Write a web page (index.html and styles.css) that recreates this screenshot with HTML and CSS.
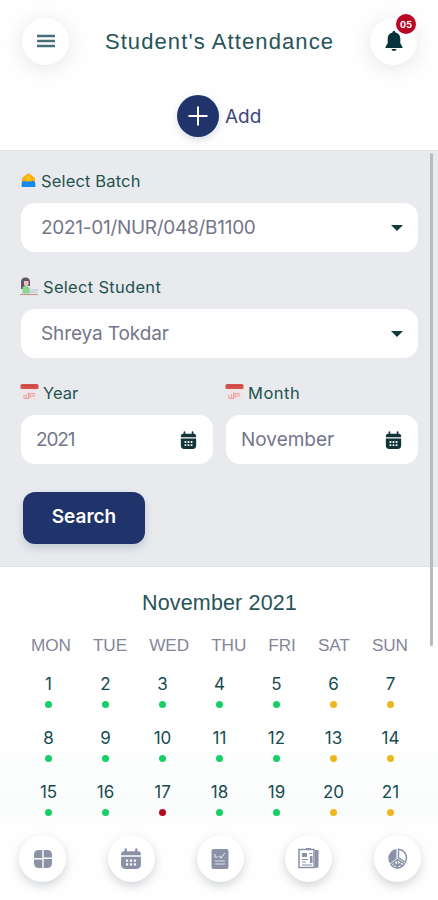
FILE: index.html
```html
<!DOCTYPE html>
<html lang="en">
<head>
<meta charset="utf-8">
<meta name="viewport" content="width=device-width, initial-scale=1">
<title>Student's Attendance</title>
<link rel="stylesheet" href="styles.css">
</head>
<body>
<svg class="defs" aria-hidden="true">
  <symbol id="calendar" viewBox="0 0 20 20" preserveAspectRatio="none">
    <path fill="currentColor" d="M1 5.2Q1.200 3 3.500 3h.7V1.200a1 1 0 0 1 2 0V3h7.600V1.200a1 1 0 0 1 2 0V3h.7Q18.800 3 19 5.200V6.500H1z"/>
    <path fill="currentColor" fill-rule="evenodd" d="M1 8h18v7q0 4-4 4H5q-4 0-4-4zM5.400 10.500v2h2v-2zm3.600 0v2h2v-2zm3.600 0v2h2v-2zm-7.200 3.400v2h2v-2zm3.600 0v2h2v-2zm3.600 0v2h2v-2z"/>
  </symbol>
  <symbol id="date" viewBox="0 0 19 18">
    <path fill="#efe5e8" d="M2 5h15v12H2z"/>
    <path fill="#d6534d" d="M2 1h15q1.500 0 1.500 1.500V5q0 1-1 1h-16q-1 0-1-1V2.500Q.5 1 2 1z"/>
    <path stroke="#b93f3c" stroke-width=".8" d="M3 2.800h13"/>
    <path fill="none" stroke="#e9a29e" stroke-width="1.100" d="M4 12v3.500M6.300 11v4M8.500 9.500v6M10 15v-4.500h4v2.500h-3.500M4 15.500h5"/>
  </symbol>
</svg>
<div class="app">
  <header class="header">
    <button class="round" aria-label="Menu"><svg width="18" height="14" viewBox="0 0 18 14"><path d="M0 2h18M0 7h18M0 12h18" stroke="#457078" stroke-width="2.600"/></svg></button>
    <h1>Student's Attendance</h1>
    <button class="round" aria-label="Notifications"><svg width="18" height="21" viewBox="0 0 18 21"><path fill="#06333c" d="M9 0c1 0 1.500.7 1.500 1.600C14 2.400 15.300 5 15.300 8v4.200L17.500 16v1H.5v-1l2.200-3.800V8c0-3 1.300-5.600 4.800-6.400C7.500.7 8 0 9 0zM6.300 18h5.400Q11 20 9 20t-2.700-2z"/></svg><span class="badge">05</span></button>
  </header>
  <div class="add"><button class="plus" aria-label="Add"><svg width="20" height="20" viewBox="0 0 20 20"><path d="M10 .5v19M.5 10h19" stroke="#fff" stroke-width="2"/></svg></button><span>Add</span></div>

  <main class="panel">
    <label class="label batch"><svg width="15" height="16" viewBox="0 0 15 16"><path fill="#ffad0c" d="M7.500 0l3 2.200 3.500 3L14 9H1V5.200l3.500-3z"/><circle cx="7.500" cy="5.500" r="2.300" fill="#ffc519"/><path fill="#1688ee" d="M.7 9.500Q3 6.500 5 8.500h5q2-2 4.300 1V14H.7z"/></svg><span>Select Batch</span></label>
    <div class="field select"><span class="value v1">2021-01/NUR/048/B1100</span><i class="caret"></i></div>
    <label class="label student"><svg width="19" height="19" viewBox="0 0 19 19"><path fill="#635568" d="M1 12V5q0-4.500 4.500-4.500T10 5v4H7l-3 3z"/><path fill="#e7c4bb" d="M4 4h4.500v4L6 10 4 8z"/><path fill="#8bd78f" d="M2.500 10L6 8.500 9.800 11v5.500H2.500z"/><path fill="#c9d7df" d="M9 16l2-4h7.500l-2 4z"/><path stroke="#c99991" stroke-width="1.200" d="M0 17.500h18"/></svg><span>Select Student</span></label>
    <div class="field select"><span class="value v2">Shreya Tokdar</span><i class="caret"></i></div>
    <div class="pair">
      <div>
        <label class="label"><svg width="19" height="18"><use href="#date"/></svg><span>Year</span></label>
        <div class="field"><span class="value v3">2021</span><svg class="cal" width="17" height="19"><use href="#calendar"/></svg></div>
      </div>
      <div>
        <label class="label"><svg width="19" height="18"><use href="#date"/></svg><span class="l4">Month</span></label>
        <div class="field"><span class="value">November</span><svg class="cal" width="17" height="19"><use href="#calendar"/></svg></div>
      </div>
    </div>
    <button class="search">Search</button>
  </main>

  <section class="calendar">
    <h2>November 2021</h2>
    <div class="names"><span>MON</span><span>TUE</span><span>WED</span><span>THU</span><span>FRI</span><span>SAT</span><span>SUN</span></div>
    <div class="days"><span>1</span><span>2</span><span>3</span><span>4</span><span>5</span><span class="off">6</span><span class="off">7</span></div>
    <div class="days"><span>8</span><span>9</span><span>10</span><span>11</span><span>12</span><span class="off">13</span><span class="off">14</span></div>
    <div class="days"><span>15</span><span>16</span><span class="absent">17</span><span>18</span><span>19</span><span class="off">20</span><span class="off">21</span></div>
  </section>

  <nav class="tabs">
    <button class="round" aria-label="Dashboard"><svg width="18" height="18" viewBox="0 0 18 18"><path fill="currentColor" d="M8.300 0v8H0V5q0-5 5-5zM9.700 0H13q5 0 5 5v2.500H9.700zM0 9.500h8.300V18H5q-5 0-5-5zM9.700 9H18v4q0 5-5 5H9.700z"/></svg></button>
    <button class="round" aria-label="Calendar"><svg width="22" height="22"><use href="#calendar"/></svg></button>
    <button class="round" aria-label="Results"><svg width="18" height="20" viewBox="0 0 18 20"><rect width="17" height="20" x=".5" rx="2" fill="currentColor"/><path fill="none" stroke="#dfe2e9" stroke-width="1.100" d="M4 5v3h3M8 7l2 2 4-5M4 12h10M4 15h10"/></svg></button>
    <button class="round" aria-label="News"><svg width="21" height="21" viewBox="0 0 21 21"><path fill="none" stroke="currentColor" stroke-width="1.500" d="M1 1.500h15v18H1z"/><path fill="currentColor" d="M17 2h3.500v16q0 2-3.500 2zM4 5h5v4H4zM12 8h2.500v7H12zM8 0h5v2H8z"/><path stroke="currentColor" stroke-width="1.200" d="M11 5.500h3.500M4 11.500h6M4 14h4M4 17h10"/></svg></button>
    <button class="round" aria-label="Reports"><svg width="21" height="21" viewBox="0 0 21 21"><path fill="currentColor" d="M9.500 1v9.500L3 15.500Q-.5 10 3 5 5.500 1.500 9.500 1z"/><path fill="none" stroke="currentColor" stroke-width="1.400" d="M11.500 1.200v8.600l6.800 4.500Q21 9 17.700 4.500 15.500 1.600 11.500 1.200zM10.500 11.500L4 16.500q2.500 3.500 6.500 3.500t6.800-4zM7 14.500l3 4M14 14l-3 4M6 17h9M10.500 12v7.500"/></svg></button>
  </nav>
  <div class="scrollbar"></div>
</div>
</body>
</html>
```

FILE: styles.css
```css
* { box-sizing: border-box; }
body { margin: 0; background: #fff; font-family: Inter, "Liberation Sans", sans-serif; color: #174b50; }
button { border: 0; padding: 0; font: inherit; color: inherit; }
svg { display: block; flex: none; }
.defs { position: absolute; width: 0; height: 0; }
.app { position: relative; width: 438px; height: 900px; overflow: hidden; display: flex; flex-direction: column; background: #fefefe; }
.header { height: 82px; padding: 0 21px 0 22px; display: flex; align-items: center; justify-content: space-between; }
.round { position: relative; width: 47px; height: 47px; border-radius: 50%; background: #fff; display: flex; align-items: center; justify-content: center; box-shadow: 0 3px 18px rgba(35, 60, 75, .12); }
h1 { margin: 2px 0 0 0; font: 400 22px/30px "Liberation Sans", sans-serif; letter-spacing: 1.1px; white-space: nowrap; color: #285458; }
.badge { position: absolute; left: 26px; top: -4px; width: 20px; height: 20px; border-radius: 50%; background: #b90824; color: #fff; font-size: 9px; font-weight: 700; line-height: 21px; text-align: center; }
.add { height: 68px; padding: 13px 0 0 177px; display: flex; align-items: flex-start; color: #3e477d; }
.add span { margin-left: 6px; font-size: 19px; line-height: 43px; }
.plus { width: 42px; height: 42px; border-radius: 50%; background: #20336a; display: flex; align-items: center; justify-content: center; box-shadow: 0 3px 7px rgba(30, 50, 90, .16); }
.panel { height: 417px; padding: 17px 20px 0 21px; background: #e8eaee; border-top: 1px solid #dfe1e4; border-bottom: 1px solid #e0e2e6; }
.label { height: 27px; display: flex; align-items: center; font-size: 16.500px; line-height: 27px; white-space: nowrap; color: #25534f; }
.label svg { margin: -3px 4px 0 -1px; }
.batch { letter-spacing: .15px; }
.batch svg { margin: -2px 6px 0 0; }
.batch span { margin-left: -1px; }
.student { letter-spacing: .3px; }
.l4 { letter-spacing: .5px; }
.field { height: 49px; margin: 8px 0 22px; padding: 0 16px 0 15px; border-radius: 14px; background: #fff; display: flex; align-items: center; justify-content: space-between; }
.select { padding: 0 15px 0 20px; }
.value { font-size: 19px; line-height: 26px; color: #74758b; white-space: nowrap; }
.v1 { letter-spacing: -.28px; }
.v2 { letter-spacing: -.1px; }
.v3 { letter-spacing: -1.100px; }
.caret { border: 6px solid transparent; border-top-color: #113c3d; border-bottom: 0; }
.cal { color: #113438; margin-top: 2px; }
.pair { display: grid; grid-template-columns: 192px 192px; gap: 13px; }
.search { width: 122px; height: 52px; margin: 6px 0 0 2px; padding-bottom: 3px; border-radius: 12px; background: #20336a; color: #fff; font-size: 19px; font-weight: 600; box-shadow: 0 4px 8px rgba(40, 85, 100, .2); display: block; }
.calendar { height: 250px; padding: 21px 19px 0 20px; background: linear-gradient(#fff 60%, #fafcfc); }
h2 { margin: 0; font: 400 21.500px/30px "Liberation Sans", sans-serif; letter-spacing: .15px; text-align: center; color: #285458; }
.names { display: flex; justify-content: space-between; margin: 16px 0 15px; padding: 0 11px; font: 400 17.200px/22px "Liberation Sans", sans-serif; letter-spacing: -.1px; color: #85869a; }
.days { display: grid; grid-template-columns: repeat(7, 57px); text-align: center; height: 54px; font-size: 17px; line-height: 26px; }
.days span::after { content: ""; display: block; width: 7px; height: 7px; margin: 4px auto 0; border-radius: 50%; background: #15cf67; }
.days .off::after { background: #edb71b; }
.days .absent::after { background: #b90824; }
.tabs { height: 83px; padding: 18px 17px 0 19px; display: flex; justify-content: space-between; color: #8b91a6; background: #fefefe; }
.tabs .round { box-shadow: 0 4px 10px rgba(40, 55, 70, .2); }
.scrollbar { position: absolute; left: 430px; top: 153px; width: 3px; height: 493px; border-radius: 2px; background: #b8babd; }
```
